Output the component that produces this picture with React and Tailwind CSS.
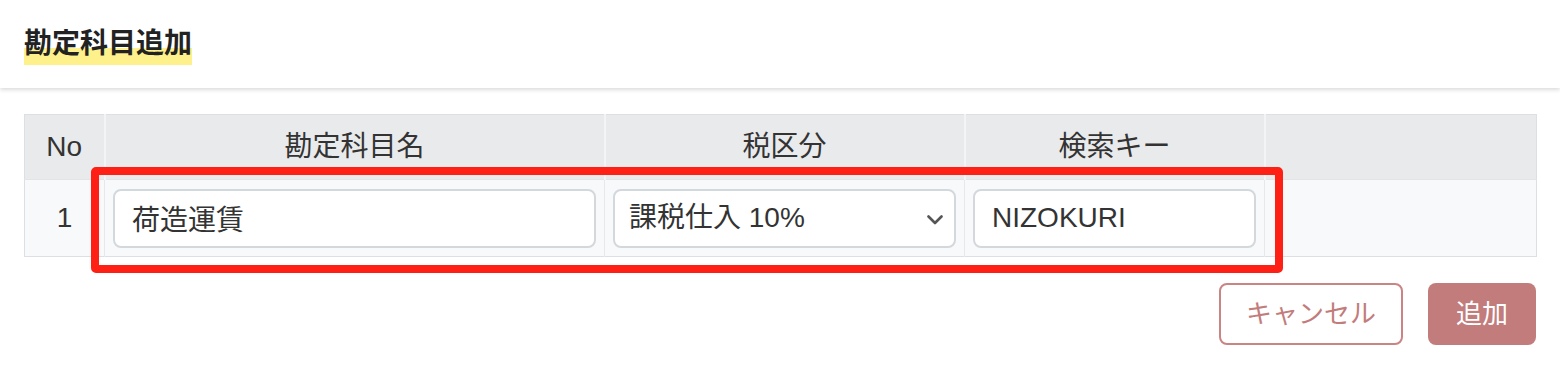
import React from "react";

const font = { fontFamily: '"Liberation Sans", "Noto Sans CJK JP", sans-serif' };

export default function App() {
  return (
    <div className="w-[1560px] h-[384px] bg-white text-[#333]" style={font}>
      <div className="h-[88px] flex items-center px-6 bg-white shadow-[0_2px_4px_rgba(0,0,0,0.14)] relative z-10">
        <h1 className="text-[28px] leading-[42px] font-bold text-[#222] bg-[linear-gradient(transparent_60%,#fef08a_60%)]">
          勘定科目追加
        </h1>
      </div>
      <div className="px-6 pt-[26px]">
        <div className="relative">
          <table className="w-[1512px] table-fixed border-collapse border border-[#dcdfe3] text-[28px]">
            <colgroup>
              <col className="w-[80px]" />
              <col className="w-[500px]" />
              <col className="w-[360px]" />
              <col className="w-[300px]" />
              <col className="w-[272px]" />
            </colgroup>
            <thead>
              <tr className="h-[65px] bg-[#e9eaec]">
                <th className="font-normal text-center border-b border-[#e2e4e7]">No</th>
                <th className="font-normal text-center border-l-2 border-l-[#f3f4f6] border-b border-b-[#e2e4e7]">勘定科目名</th>
                <th className="font-normal text-center border-l-2 border-l-[#f3f4f6] border-b border-b-[#e2e4e7]">税区分</th>
                <th className="font-normal text-center border-l-2 border-l-[#f3f4f6] border-b border-b-[#e2e4e7]">検索キー</th>
                <th className="font-normal text-center border-l-2 border-l-[#f3f4f6] border-b border-b-[#e2e4e7]"></th>
              </tr>
            </thead>
            <tbody>
              <tr className="h-[77px] bg-[#f8f9fa]">
                <td className="text-center">1</td>
                <td className="border-l border-[#e6e8eb] px-2">
                  <input
                    readOnly
                    value="荷造運賃"
                    className="w-full h-[59px] bg-white border-2 border-[#d3d8dd] rounded-[8px] px-[17px] text-[28px] text-[#333] outline-none"
                    style={font}
                  />
                </td>
                <td className="border-l border-[#e6e8eb] px-2">
                  <div className="relative">
                    <select
                      className="w-full h-[59px] appearance-none bg-white border-2 border-[#d3d8dd] rounded-[8px] pl-[14px] pr-10 text-[28px] text-[#333] outline-none"
                      style={font}
                      defaultValue="10"
                    >
                      <option value="10">課税仕入 10%</option>
                    </select>
                    <svg
                      className="absolute right-[13px] top-[26px] pointer-events-none"
                      width="16"
                      height="10"
                      viewBox="0 0 16 10"
                      fill="none"
                    >
                      <path d="M1.5 1.5 L8 8 L14.5 1.5" stroke="#555" strokeWidth="2.6" strokeLinecap="round" strokeLinejoin="round" />
                    </svg>
                  </div>
                </td>
                <td className="border-l border-[#e6e8eb] px-2">
                  <input
                    readOnly
                    value="NIZOKURI"
                    className="w-full h-[59px] bg-white border-2 border-[#d3d8dd] rounded-[8px] px-[17px] text-[28px] text-[#333] outline-none"
                    style={font}
                  />
                </td>
                <td className="border-l border-[#e6e8eb]"></td>
              </tr>
            </tbody>
          </table>
          <div className="absolute left-[67px] top-[53px] w-[1192px] h-[106px] border-[8px] border-[#fe2015] rounded-[5px] pointer-events-none" />
        </div>
        <div className="flex justify-end gap-[25px] mt-[26px]">
          <button className="h-[62px] w-[184px] border-2 border-[#c98483] rounded-[8px] text-[26px] text-[#c27c7b] bg-white" style={font}>
            キャンセル
          </button>
          <button className="h-[62px] w-[108px] rounded-[8px] text-[26px] text-white bg-[#c17c7b]" style={font}>
            追加
          </button>
        </div>
      </div>
    </div>
  );
}
